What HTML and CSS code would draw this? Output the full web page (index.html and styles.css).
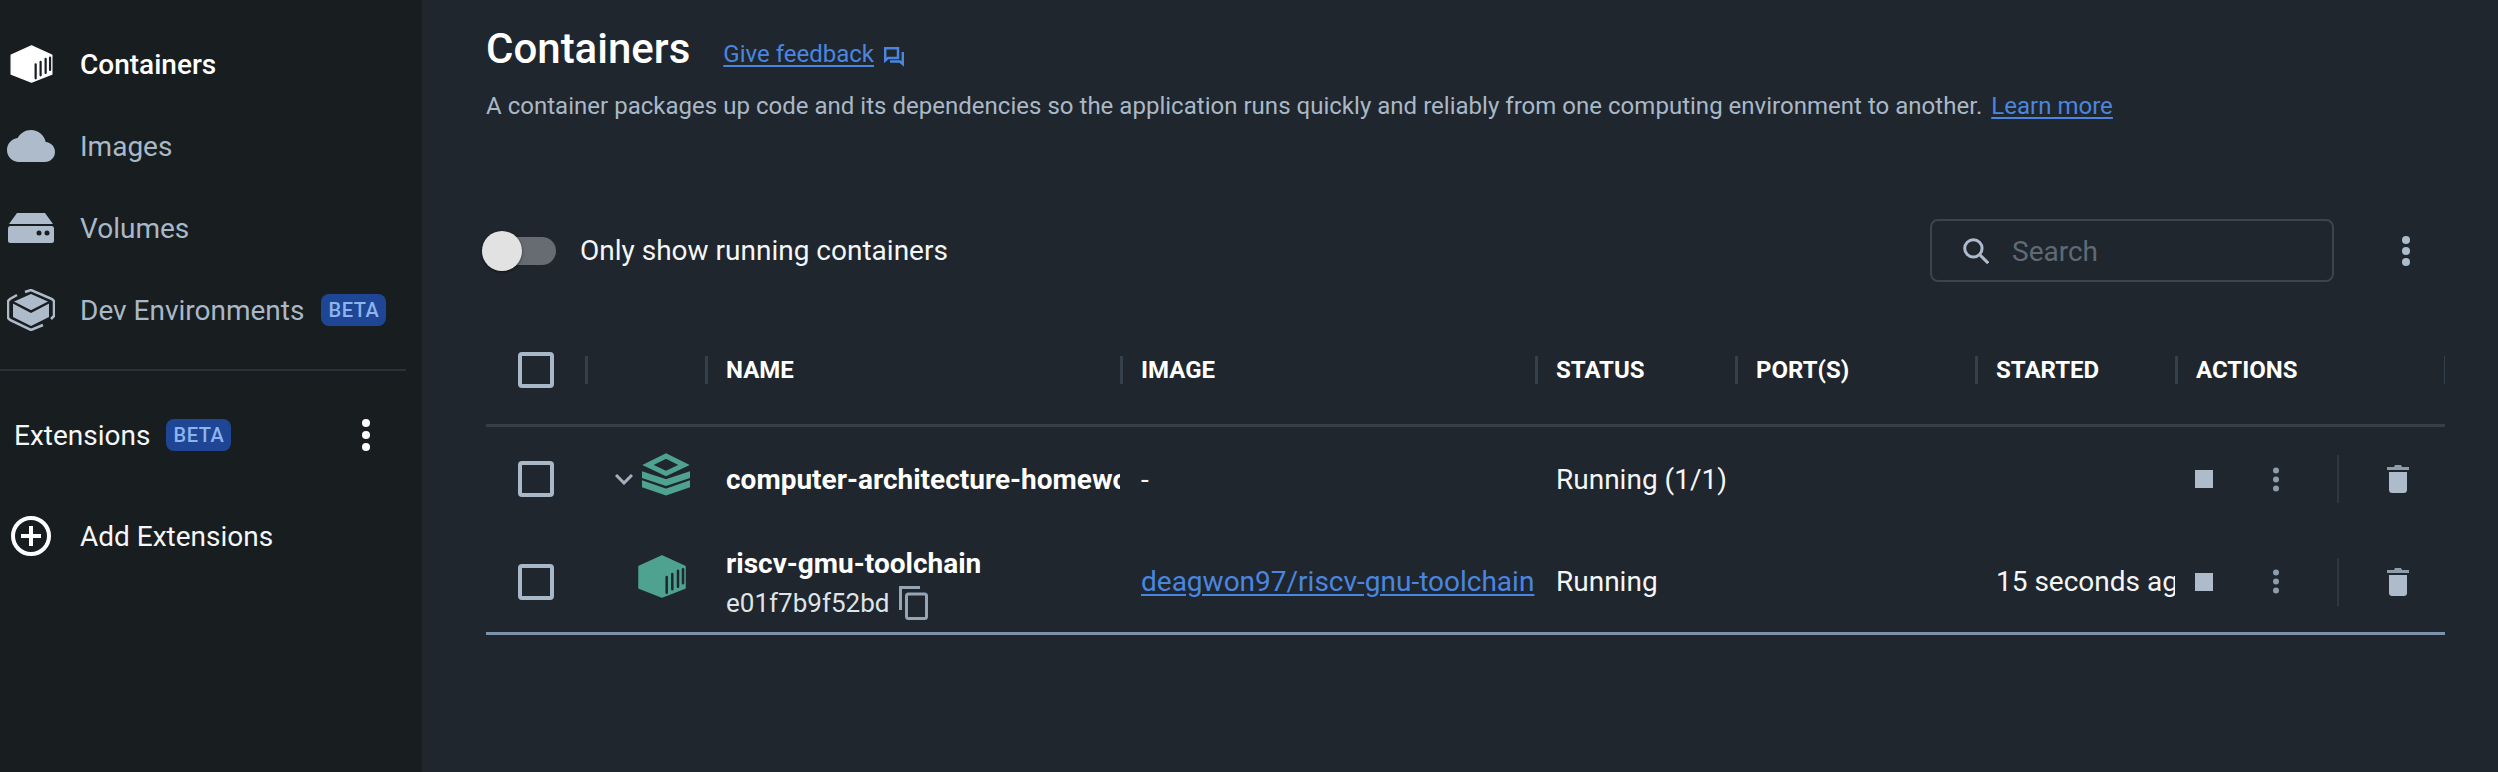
FILE: index.html
```html
<!DOCTYPE html>
<html lang="en">
<head>
<meta charset="utf-8">
<title>Containers</title>
<link rel="stylesheet" href="styles.css">
</head>
<body>
<div class="app">
  <aside class="sidebar">
    <nav class="nav">
      <a class="nav-item active">
        <span class="nav-icon"><svg width="43" height="38" viewBox="0 0 48 43"><path fill="#fff" stroke="#fff" stroke-width="1.500" stroke-linejoin="round" d="M24 1 47 11.500V33L24 42 1 33V11.500Z"/><path stroke="#181d20" stroke-width="2.500" stroke-linecap="round" fill="none" d="M28.700 22V37.700M34.300 19V34.300M40 15.700V31.700M45 14.300V28.300"/></svg></span>
        <span>Containers</span>
      </a>
      <a class="nav-item">
        <span class="nav-icon"><svg width="48" height="32" viewBox="0 4 24 16"><path fill="#adbbca" d="M19.350 10.040C18.670 6.590 15.640 4 12 4 9.110 4 6.600 5.640 5.350 8.040 2.340 8.360 0 10.910 0 14c0 3.310 2.690 6 6 6h13c2.760 0 5-2.240 5-5 0-2.640-2.050-4.780-4.650-4.960z"/></svg></span>
        <span>Images</span>
      </a>
      <a class="nav-item">
        <span class="nav-icon"><svg width="46" height="30" viewBox="0 0 46 30"><path fill="#adbbca" d="M9 0H37L45 11H1Z"/><rect fill="#adbbca" x="0" y="13" width="46" height="17" rx="2.500"/><circle fill="#181d20" cx="31" cy="20" r="2.500"/><circle fill="#181d20" cx="39" cy="20" r="2.500"/></svg></span>
        <span>Volumes</span>
      </a>
      <a class="nav-item">
        <span class="nav-icon"><svg width="48" height="42" viewBox="0 0 48 42"><path fill="none" stroke="#adbbca" stroke-width="2.500" d="M18 3 24 1 45 10 47 12V27L44 30M10 6 3 10 1 12V29L3 31 24 41 36 36"/><path fill="#adbbca" d="M24 5 42 13V28L24 37 6 28V13Z"/><path fill="none" stroke="#181d20" stroke-width="2.500" d="M4.500 12.500 24 22.500 43.500 12.500"/></svg></span>
        <span>Dev Environments</span>
        <span class="badge">BETA</span>
      </a>
    </nav>
    <div class="side-divider"></div>
    <div class="ext-row">
      <span class="ext-label">Extensions</span>
      <span class="badge">BETA</span>
      <span class="ext-dots"><svg width="8" height="32" viewBox="0 0 8 32"><circle cx="4" cy="4" r="4" fill="#fff"/><circle cx="4" cy="16" r="4" fill="#fff"/><circle cx="4" cy="28" r="4" fill="#fff"/></svg></span>
    </div>
    <a class="nav-item add-ext">
      <span class="nav-icon"><svg width="40" height="40" viewBox="0 0 40 40"><circle cx="20" cy="20" r="18" fill="none" stroke="#fff" stroke-width="4"/><path stroke="#fff" stroke-width="4" d="M20 10V30M10 20H30"/></svg></span>
      <span>Add Extensions</span>
    </a>
  </aside>

  <main class="main">
    <div class="title-row">
      <h1 class="title">Containers</h1>
      <a class="link feedback">Give feedback</a>
      <svg class="feedback-icon" width="20" height="20" viewBox="0 0 20 20"><path fill="none" stroke="#4a86e0" stroke-width="2.500" d="M1.200 1.200H14V11H4L1.200 13.500Z"/><path fill="none" stroke="#4a86e0" stroke-width="2.500" d="M6 14.500H16L18.800 17V5"/></svg>
    </div>
    <p class="desc">A container packages up code and its dependencies so the application runs quickly and reliably from one computing environment to another. <a class="link learn">Learn more</a></p>

    <div class="toolbar">
      <span class="toggle"><span class="toggle-knob"></span></span>
      <span class="toggle-label">Only show running containers</span>
      <label class="search">
        <svg width="30" height="30" viewBox="0 0 30 30"><circle cx="12" cy="12" r="10" fill="none" stroke="#adbbca" stroke-width="3.500"/><path stroke="#adbbca" stroke-width="3.500" d="M19 19 29 29"/></svg>
        <input class="search-input" type="text" placeholder="Search">
      </label>
      <span class="toolbar-dots"><svg width="10" height="32" viewBox="0 0 10 32"><circle cx="5" cy="5" r="4" fill="#adbbca"/><circle cx="5" cy="16" r="4" fill="#adbbca"/><circle cx="5" cy="27" r="4" fill="#adbbca"/></svg></span>
    </div>

    <div class="table">
      <div class="row head">
        <div class="cell-check"><span class="checkbox"></span></div>
        <div class="th"></div>
        <div class="th">NAME</div>
        <div class="th">IMAGE</div>
        <div class="th">STATUS</div>
        <div class="th">PORT(S)</div>
        <div class="th">STARTED</div>
        <div class="th last">ACTIONS</div>
      </div>

      <div class="row body-row first">
        <div class="cell-check"><span class="checkbox"></span></div>
        <div class="cell-icon group-icon">
          <svg class="chevron" width="18" height="11" viewBox="0 0 18 11"><path fill="none" stroke="#a3b1c0" stroke-width="3" d="M1 1 9 9 17 1"/></svg>
          <svg width="48" height="44" viewBox="0 0 48 44"><path fill="none" stroke="#4fa290" stroke-width="5" d="M24 4 42 13 24 21.500 6 13Z"/><path fill="none" stroke="#4fa290" stroke-width="6.500" d="M-2 22 24 30.500 50 22M-2 31 24 40 50 31"/></svg>
        </div>
        <div class="td name">computer-architecture-homework</div>
        <div class="td">-</div>
        <div class="td">Running (1/1)</div>
        <div class="td"></div>
        <div class="td"></div>
        <div class="actions">
          <span class="act"><span class="stop"></span></span>
          <span class="act dots"><svg width="8" height="25" viewBox="0 0 8 25"><circle cx="4" cy="3.500" r="3" fill="#8e9dad"/><circle cx="4" cy="12.500" r="3" fill="#8e9dad"/><circle cx="4" cy="21.500" r="3" fill="#8e9dad"/></svg></span>
          <span class="act-divider"></span>
          <span class="act trash"><svg width="22" height="28" viewBox="0 0 22 28"><path fill="#8e9dad" d="M8 0H14L15 2H22V5H0V2H7Z"/><path fill="#adbbca" d="M2 7H20V25C20 26.700 18.700 28 17 28H5C3.300 28 2 26.700 2 25Z"/></svg></span>
        </div>
      </div>

      <div class="row body-row last-row">
        <div class="cell-check"><span class="checkbox"></span></div>
        <div class="cell-icon container-icon">
          <svg width="48" height="43" viewBox="0 0 48 43"><path fill="#4fa290" stroke="#4fa290" stroke-width="1.500" stroke-linejoin="round" d="M24 1 47 11.500V33L24 42 1 33V11.500Z"/><path stroke="#1f262d" stroke-width="2.500" stroke-linecap="round" fill="none" d="M28.700 22V37.700M34.300 19V34.300M40 15.700V31.700M45 14.300V28.300"/></svg>
        </div>
        <div class="td stacked">
          <div class="name">riscv-gmu-toolchain</div>
          <div class="id-line"><span>e01f7b9f52bd</span>
            <svg class="copy-icon" width="29" height="34" viewBox="0 0 29 34"><path fill="none" stroke="#94a5b6" stroke-width="3" d="M1.500 24V1.500H21"/><rect x="7.500" y="8" width="20" height="24.500" rx="2" fill="none" stroke="#94a5b6" stroke-width="3"/></svg>
          </div>
        </div>
        <div class="td"><a class="link">deagwon97/riscv-gnu-toolchain</a></div>
        <div class="td">Running</div>
        <div class="td"></div>
        <div class="td">15 seconds ago</div>
        <div class="actions">
          <span class="act"><span class="stop"></span></span>
          <span class="act dots"><svg width="8" height="25" viewBox="0 0 8 25"><circle cx="4" cy="3.500" r="3" fill="#8e9dad"/><circle cx="4" cy="12.500" r="3" fill="#8e9dad"/><circle cx="4" cy="21.500" r="3" fill="#8e9dad"/></svg></span>
          <span class="act-divider"></span>
          <span class="act trash"><svg width="22" height="28" viewBox="0 0 22 28"><path fill="#8e9dad" d="M8 0H14L15 2H22V5H0V2H7Z"/><path fill="#adbbca" d="M2 7H20V25C20 26.700 18.700 28 17 28H5C3.300 28 2 26.700 2 25Z"/></svg></span>
        </div>
      </div>
    </div>
  </main>
</div>
</body>
</html>
```

FILE: styles.css
```css
* { box-sizing: border-box; }
html, body { margin: 0; height: 100%; }
body {
  font-family: Roboto, "Liberation Sans", sans-serif;
  background: #1f262d;
  color: #fff;
  overflow: hidden;
}
.app { display: flex; height: 772px; }

.sidebar {
  width: 422px;
  flex: none;
  background: #181d20;
  padding-top: 23px;
}
.nav { display: flex; flex-direction: column; }
.nav-item {
  display: flex;
  align-items: center;
  height: 82px;
  font-size: 28px;
  color: #a9b8c8;
}
.nav-item.active { color: #fff; font-weight: 500; }
.nav-icon {
  width: 62px;
  margin-right: 18px;
  display: flex;
  justify-content: center;
  align-items: center;
  flex: none;
}
.badge {
  background: #1e4695;
  color: #8db4ee;
  font-size: 20px;
  font-weight: 500;
  height: 32px;
  width: 65px;
  border-radius: 8px;
  display: flex;
  align-items: center;
  justify-content: center;
  margin-left: 17px;
  letter-spacing: .5px;
}
.side-divider {
  width: 406px;
  height: 2px;
  background: #2b3136;
  margin-top: 18px;
}
.ext-row {
  display: flex;
  align-items: center;
  height: 64px;
  margin-top: 32px;
  padding-left: 14px;
  font-size: 28px;
  color: #f4f6f8;
}
.ext-row .badge { margin-left: 16px; }
.ext-dots { display: flex; margin-left: 131px; }
.add-ext { margin-top: 28px; color: #f4f6f8; }

.main {
  flex: 1;
  min-width: 0;
  padding: 23px 53px 0 64px;
  display: flex;
  flex-direction: column;
}
.title-row { display: flex; align-items: center; height: 52px; }
.title { margin: 0; font-size: 42px; font-weight: 500; line-height: 52px; }
.link { color: #4a86e0; text-decoration: underline; text-underline-offset: 3px; }
.feedback { margin-left: 33px; font-size: 24px; position: relative; top: 5px; }
.feedback-icon { margin-left: 10px; position: relative; top: 8px; }
.desc {
  margin: 13px 0 0;
  font-size: 24px;
  line-height: 36px;
  color: #a9b8c8;
  letter-spacing: .02px;
}
.learn { margin-left: 3px; }

.toolbar { display: flex; align-items: center; height: 63px; margin-top: 95px; }
.toggle {
  width: 70px;
  height: 28px;
  background: #666c72;
  border-radius: 14px;
  position: relative;
  flex: none;
}
.toggle-knob {
  position: absolute;
  left: -4px;
  top: -6px;
  width: 40px;
  height: 40px;
  border-radius: 50%;
  background: #e2e2e2;
  box-shadow: 0 1px 3px rgba(0,0,0,.5);
}
.toggle-label { font-size: 28px; margin-left: 24px; color: #f4f6f8; }
.search {
  margin-left: auto;
  width: 404px;
  height: 63px;
  border: 2px solid #3a454f;
  border-radius: 8px;
  display: flex;
  align-items: center;
  padding-left: 31px;
}
.search-input {
  background: transparent;
  border: 0;
  outline: 0;
  font: inherit;
  font-size: 28px;
  color: #fff;
  margin-left: 23px;
  width: 320px;
  padding: 1px 0 0;
}
.search-input::placeholder { color: #5f6a75; opacity: 1; }
.toolbar-dots { display: flex; margin-left: 67px; margin-right: 34px; }

.table { margin-top: 31px; }
.row {
  display: grid;
  grid-template-columns: 99px 120px 415px 415px 200px 240px 200px 270px;
  align-items: center;
}
.head { height: 114px; padding-top: 2px; border-bottom: 3px solid #363f48; }
.body-row { height: 104px; }
.last-row { height: 104px; border-bottom: 3px solid #7b93ad; }
.cell-check { display: flex; padding-left: 32px; }
.checkbox {
  width: 36px;
  height: 36px;
  border: 4px solid #a9b8c8;
  border-radius: 4px;
  display: block;
}
.th {
  font-size: 24px;
  font-weight: 700;
  line-height: 28px;
  height: 28px;
  padding-left: 18px;
  border-left: 3px solid #34414d;
}
.th.last { position: relative; }
.th.last::after {
  content: "";
  position: absolute;
  right: 0;
  top: 0;
  bottom: 0;
  width: 1px;
  background: #34414d;
}
.td {
  font-size: 28px;
  padding-left: 21px;
  white-space: nowrap;
  overflow: hidden;
  color: #f4f6f8;
}
.name { font-weight: 700; color: #fff; font-size: 28px; }
.cell-icon { display: flex; align-items: center; }
.group-icon { padding-left: 30px; gap: 9px; padding-bottom: 10px; }
.chevron { margin-top: 10px; }
.container-icon { padding-left: 53px; padding-bottom: 10px; }
.stacked { display: flex; flex-direction: column; gap: 6px; padding-top: 4px; }
.id-line { display: flex; align-items: center; font-size: 26px; color: #dfe4e9; }
.copy-icon { margin-left: 10px; }
.actions { display: flex; align-items: center; padding-left: 9px; }
.act { width: 40px; display: flex; justify-content: center; align-items: center; flex: none; }
.stop { width: 18px; height: 18px; background: #adbbca; display: block; }
.dots { margin-left: 32px; }
.act-divider { width: 2px; height: 48px; background: #30383f; margin-left: 41px; }
.trash { margin-left: 39px; }
```
